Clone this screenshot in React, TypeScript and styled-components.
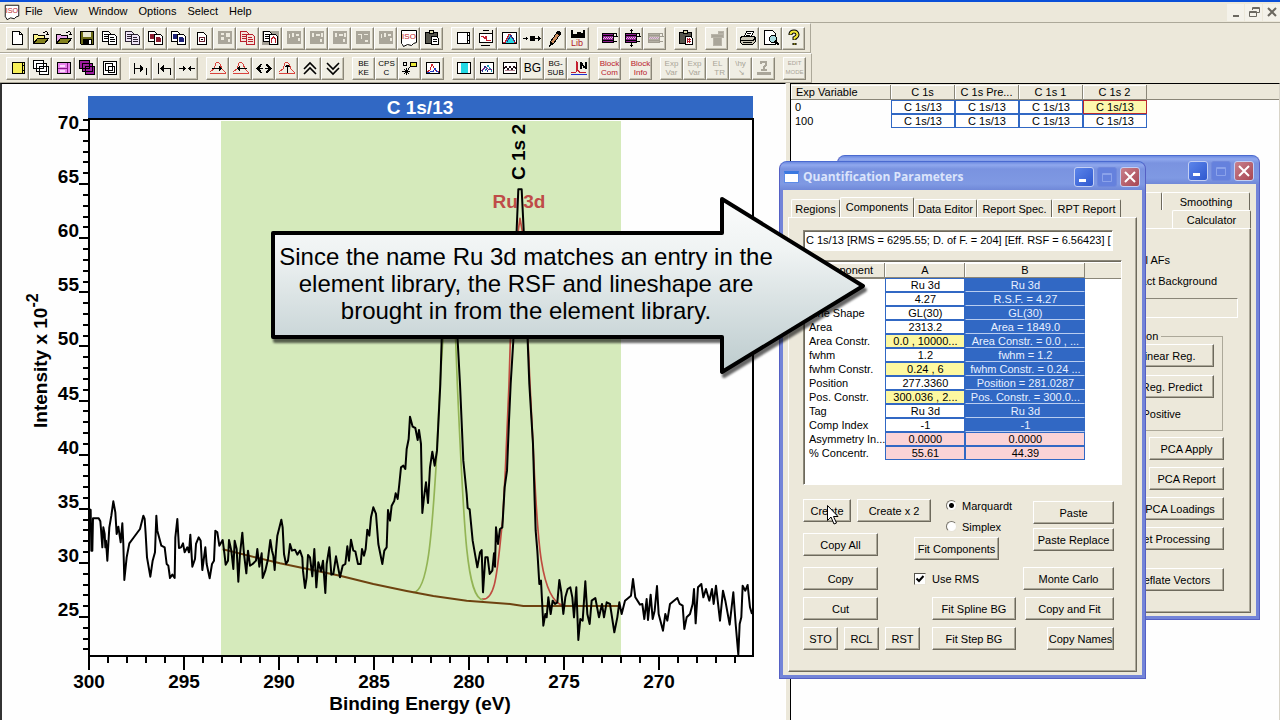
import React from "react";
import styled, { createGlobalStyle, css } from "styled-components";

const Global = createGlobalStyle`
  * { box-sizing: border-box; }
  body { margin: 0; background: #ece8da; overflow: hidden; }
  body, button, input, table { font-family: "Liberation Sans", Arial, sans-serif; font-size: 11px; color: #000; }
`;

const face = "#ece8da";
const blue = "#3168c4";

/* ---------- application frame ---------- */

const Desktop = styled.div`
  position: relative;
  display: flex;
  flex-direction: column;
  height: 100vh;
  background: ${face};
  overflow: hidden;
`;

const MenuBar = styled.nav`
  display: flex;
  align-items: center;
  height: 23px;
  border-top: 2px solid #0a4fd8;
  border-bottom: 1px solid #aca899;
  padding-left: 3px;
`;

const MenuItem = styled.button`
  border: 0;
  background: none;
  padding: 0;
  margin-right: 11px;
  line-height: 14px;
  margin-bottom: 2px;
`;

const MenuLogo = styled.span`
  display: flex;
  width: 22px;
`;

const FrameButtons = styled.div`
  display: flex;
  gap: 1px;
  margin-left: auto;
`;

const FrameButton = styled.button`
  width: 17px;
  height: 17px;
  padding: 0;
  border: 0;
  background: #f4f2ea;
  display: grid;
  place-items: center;
`;

const ToolRow = styled.div`
  display: flex;
  align-items: center;
  align-self: flex-start;
  gap: 8px;
  height: 30px;
  padding: 0 5px 0 6px;
  border-top: 1px solid #fff;
  border-bottom: 1px solid #aca899;
  border-right: 1px solid #aca899;
`;

const ToolGroup = styled.div`
  display: flex;
`;

const ToolButton = styled.button`
  width: 23px;
  height: 23px;
  padding: 0;
  display: grid;
  place-items: center;
  overflow: hidden;
  background: #f0eee4;
  border: 1px solid;
  border-color: #fff #8a8678 #8a8678 #fff;
  box-shadow: inset -1px -1px 0 #c4c0b0;
`;

const TinyText = styled.span<{ $color?: string; $size?: number }>`
  font-size: ${(p) => p.$size ?? 8}px;
  line-height: 9px;
  color: ${(p) => p.$color ?? "#000"};
  white-space: pre;
  text-align: center;
`;

const Panes = styled.div`
  flex: 1;
  min-height: 0;
  display: grid;
  grid-template-columns: 786fr 490fr;
  column-gap: 4px;
`;

const ChartPane = styled.main`
  background: #fefefe;
  border-top: 1px solid #000;
  border-left: 2px solid #333;
  border-right: 1px solid #fff;
  min-width: 0;
`;

const ListPane = styled.section`
  background: #fefefe;
  border-top: 1px solid #000;
  border-left: 1px solid #000;
  border-right: 1px solid #d8d4c8;
  min-width: 0;
`;

/* ---------- tables ---------- */

const HeaderStrip = styled.div`
  background: linear-gradient(${face} 15px, #8a8678 15px, #8a8678 16px, transparent 16px);
  padding-top: 1px;
`;

const Grid = styled.table`
  table-layout: fixed;
  border-collapse: separate;
  border-spacing: 0;
`;

const Col = styled.col<{ $w: number }>`
  width: ${(p) => p.$w}px;
`;

const HeadCell = styled.th<{ $left?: boolean }>`
  height: 15px;
  padding: 0 2px 0 ${(p) => (p.$left ? 5 : 2)}px;
  line-height: 14px;
  font-weight: normal;
  text-align: ${(p) => (p.$left ? "left" : "center")};
  background: ${face};
  border-right: 1px solid #8a8678;
  border-bottom: 1px solid #8a8678;
  box-shadow: inset 1px 1px 0 #fff;
  white-space: nowrap;
  overflow: hidden;
`;

const RowLabel = styled.th`
  height: 14px;
  padding: 0 0 0 4px;
  line-height: 12px;
  font-weight: normal;
  text-align: left;
  white-space: nowrap;
  overflow: hidden;
`;

type Tone = "plain" | "active" | "yellow" | "selected" | "pink";

const tones = {
  plain: css`background: #fff;`,
  active: css`background: #fdf8ae; border-color: #b82a30;`,
  yellow: css`background: #fdf8a0;`,
  selected: css`background: ${blue}; color: #e8f0ff; border-color: ${blue}; border-bottom-color: #b9cdf0;`,
  pink: css`background: #fbd3d6;`,
};

const Cell = styled.td<{ $tone: Tone }>`
  height: 14px;
  padding: 0;
  line-height: 12px;
  text-align: center;
  white-space: nowrap;
  overflow: hidden;
  border: 1px solid ${blue};
  ${(p) => tones[p.$tone]}
`;

/* ---------- windows ---------- */

const WindowFrame = styled.section<{ $x: number; $y: number; $w: number; $h: number }>`
  position: absolute;
  left: ${(p) => p.$x}px;
  top: ${(p) => p.$y}px;
  width: ${(p) => p.$w}px;
  min-height: ${(p) => p.$h}px;
  display: flex;
  flex-direction: column;
  padding: 0 3px 3px;
  border-radius: 8px 8px 0 0;
  background: #7384d8;
  border: 1px solid #5560c4;
  border-top-color: #4a6ad0;
`;

const TitleBar = styled.header`
  display: flex;
  align-items: center;
  height: 28px;
  padding: 1px 0 0 1px;
  margin: 0 -3px;
  border-radius: 7px 7px 0 0;
  background: linear-gradient(#6c8ae0, #90a8ee 3px, #7a93e0 7px, #7f99e3 22px, #7088d8);
`;

const TitleIcon = styled.span`
  width: 15px;
  height: 12px;
  margin: 0 4px 0 3px;
  background: #fff;
  border: 1px solid #5c8ce8;
  border-top: 3px solid #3a78e0;
`;

const Title = styled.h2`
  flex: 1;
  margin: 0;
  font-family: "Open Sans", sans-serif;
  font-size: 12px;
  font-weight: 700;
  color: #dbe4fb;
  white-space: nowrap;
`;

const Caption = styled.button<{ $kind: "min" | "max" | "close" }>`
  width: 20px;
  height: 20px;
  margin-right: ${(p) => (p.$kind === "close" ? 5 : 3)}px;
  padding: 0;
  display: grid;
  place-items: center;
  border-radius: 3px;
  border: 1px solid ${(p) => (p.$kind === "max" ? "#7088dc" : "#c3cff4")};
  background: ${(p) =>
    p.$kind === "min" ? "linear-gradient(135deg,#5c85ea,#2f58cf)" : p.$kind === "max" ? "#6581dd" : "linear-gradient(135deg,#c8808c,#a84652)"};
`;

const Client = styled.div`
  flex: 1;
  display: flex;
  flex-direction: column;
  background: ${face};
  padding: 8px 5px 3px;
`;

const TabStrip = styled.div`
  display: flex;
  align-items: flex-end;
  height: 19px;
  padding-left: 3px;
`;

const Tab = styled.button<{ $w: number; $on?: boolean }>`
  width: ${(p) => p.$w}px;
  height: ${(p) => (p.$on ? 21 : 18)}px;
  margin-bottom: ${(p) => (p.$on ? -1 : 0)}px;
  padding: 0 0 ${(p) => (p.$on ? 3 : 0)}px;
  line-height: 14px;
  white-space: nowrap;
  background: ${face};
  border: 1px solid;
  border-color: #fff #6d695c ${face} #fff;
  border-radius: 2px 2px 0 0;
  border-bottom: 0;
`;

const TabPage = styled.div`
  flex: 1;
  border: 1px solid;
  border-color: #fff #6d695c #6d695c #fff;
  box-shadow: inset -1px -1px 0 #aca899;
`;

const FitPage = styled(TabPage)`
  padding: 12px 14px 18px;
  display: flex;
  flex-direction: column;
`;

const sunken = css`
  border: 1px solid;
  border-color: #8a8678 #fff #fff #8a8678;
  box-shadow: inset 1px 1px 0 #6d695c;
`;

const Summary = styled.input`
  width: 310px;
  height: 21px;
  padding: 0 0 2px 2px;
  background: #fff;
  outline: 0;
  ${sunken}
`;

const ParamBox = styled.div`
  height: 225px;
  margin-top: 9px;
  padding: 2px 0 0 1px;
  background: #fff;
  ${sunken}
`;

const ParamHead = styled(HeaderStrip)`
  padding-top: 0;
`;

const Controls = styled.div`
  display: grid;
  grid-template-columns: 111px 102px 98px;
  row-gap: 7px;
  margin-top: 14px;
`;

const Stack = styled.div<{ $gap?: number; $top?: number; $end?: boolean }>`
  display: flex;
  flex-direction: column;
  align-items: ${(p) => (p.$end ? "flex-end" : "flex-start")};
  gap: ${(p) => p.$gap ?? 0}px;
  padding-top: ${(p) => p.$top ?? 0}px;
`;

const Line = styled.div`
  display: flex;
  gap: 6px;
`;

const Push = styled.button<{ $w: number; $end?: boolean }>`
  flex: none;
  width: ${(p) => p.$w}px;
  height: 23px;
  padding: 0;
  line-height: 14px;
  white-space: nowrap;
  justify-self: ${(p) => (p.$end ? "end" : "start")};
  background: ${face};
  border: 1px solid;
  border-color: #fff #6d695c #6d695c #fff;
  box-shadow: inset -1px -1px 0 #aca899;
`;

const Choice = styled.label`
  display: flex;
  align-items: center;
  gap: 5px;
  height: 21px;
  white-space: nowrap;
`;

const Choices = styled.div`
  padding: 0 0 0 32px;
  margin: -4px 0 0;
`;

const Radio = styled.input`
  appearance: none;
  width: 11px;
  height: 11px;
  margin: 0;
  border-radius: 50%;
  border: 1px solid;
  border-color: #77736a #e8e4d8 #e8e4d8 #77736a;
  background: #fff;
  &:checked { background: radial-gradient(#000 2px, #fff 3px); }
`;

const Check = styled.input`
  appearance: none;
  width: 12px;
  height: 12px;
  margin: 0;
  border: 1px solid;
  border-color: #55524a #e8e4d8 #e8e4d8 #55524a;
  background: #fff url("data:image/svg+xml,%3Csvg xmlns='http://www.w3.org/2000/svg' viewBox='0 0 10 10'%3E%3Cpath d='M1.5 4.5 4 7 8.500 2' fill='none' stroke='black' stroke-width='2'/%3E%3C/svg%3E");
`;

const UseRms = styled(Choice)`
  height: 23px;
  gap: 6px;
`;

/* ---------- processing window ---------- */

const BackTabs = styled.div<{ $indent: number }>`
  display: flex;
  justify-content: flex-end;
  padding-right: ${(p) => p.$indent}px;
`;

const BackPage = styled(TabPage)`
  display: flex;
  flex-direction: column;
  align-items: flex-end;
  padding: 22px 26px 20px 0;
`;

const BackLabel = styled.label<{ $shift: number }>`
  margin-right: ${(p) => p.$shift}px;
  height: 21px;
  line-height: 18px;
`;

const BackField = styled.input`
  width: 240px;
  height: 20px;
  margin: 5px -14px 0 0;
  background: ${face};
  ${sunken}
  box-shadow: none;
`;

const GroupBox = styled.fieldset`
  display: flex;
  flex-direction: column;
  align-items: flex-end;
  gap: 8px;
  width: 180px;
  height: 102px;
  margin: 11px 1px 6px 0;
  padding: 1px 8px 0 0;
  border: 1px solid #aca899;
  & > legend { margin-left: 22px; padding: 0 3px; line-height: 14px; }
`;

const GroupText = styled.label`
  margin-right: 33px;
  line-height: 16px;
`;

const PcaButtons = styled.div`
  display: flex;
  flex-direction: column;
  align-items: flex-end;
  gap: 7px;
  & > :last-child { margin-top: 11px; }
`;

/* ---------- callout ---------- */

const Callout = styled.aside`
  position: absolute;
  left: 268px;
  top: 194px;
  width: 606px;
  height: 190px;
`;

const CalloutText = styled.p`
  position: absolute;
  left: 4px;
  top: 49px;
  width: 508px;
  margin: 0;
  text-align: center;
  font-size: 24px;
  line-height: 27px;
  white-space: pre-line;
`;

const Pointer = styled.svg`
  position: absolute;
  left: 826px;
  top: 504px;
`;

/* ---------- toolbar drawings ---------- */

const I = ({ children, w = 20 }: { children: React.ReactNode; w?: number }) => (
  <svg width={w} height={w} viewBox="0 0 20 20" fill="none" stroke="#000" shapeRendering="crispEdges" aria-hidden="true">
    {children}
  </svg>
);

const Page = () => <I><path d="M4.500 3.500h7l3 3v10h-10z" fill="#fff" /><path d="M11.500 3.500v3h3" /></I>;
const Open = ({ c }: { c: string }) => (
  <I>
    <path d="M2.500 15.500v-9h4l1 1h6v3" fill={c} />
    <path d="M2.500 15.500l4-5h11l-4 5z" fill="#84821e" />
    <path d="M11.500 4.500h2l1-1h1l1 1v2m-2 0h3" />
  </I>
);
const Save = () => <I><path d="M3.500 3.500h13v13h-12l-1-1z" fill="#6d6d18" /><path d="M6 4h8v5H6z" fill="#e9e9d2" stroke="none" /><path d="M6 11h9v5H6z" fill="#000" stroke="none" /><path d="M12 12h2v4h-2z" fill="#fff" stroke="none" /></I>;
const Pages = ({ ink = "#000", fill, bg, paper = "#fff", mark }: { ink?: string; fill?: string; bg?: string; paper?: string; mark?: string }) => (
  <I>
    {bg && <path d="M1 3h17v14H1z" fill={bg} stroke="none" />}
    <path d="M2.500 3.500h6l2 2v8h-8z" fill={paper} stroke={ink} />
    <path d="M4 6.500h4M4 8.500h4M4 10.500h4" stroke={fill ?? ink} />
    <path d="M8.500 6.500h6l2 2v8h-8z" fill={paper} stroke={ink} />
    {mark ? <path d="M10.500 15v-4l2-2 2 2v4" stroke={mark} /> : <path d="M10 9.500h4M10 11.500h5M10 13.500h5" stroke={fill ?? ink} />}
    {fill && <path d="M4 7h4v4H4zM10 10h5v4h-5z" fill={fill} stroke="none" />}
  </I>
);
const PageBox = () => <I><path d="M5.500 4.500h6l3 3v9h-9z" fill="#fff" /><path d="M7.500 9.500h5v4h-5z" stroke="#6a2030" /><path d="M9 11.500h2" /></I>;
const Ghost = ({ v }: { v: number }) => (
  <I>
    <path d="M3 3h14v13H3z" fill="#aaa69a" stroke="none" />
    <path d={["M6 5h3v2H6zM11 5h4v4h-4zM6 9h3v3H6zM13 11h2v3h-2z", "M5 6h1v4H5zM8 5h2v4H8zM12 6h3v2h-3zM14 10h2v3h-2z", "M5 5h2v4H5zM9 6h4v2H9zM13 11h2v3h-2zM14 5h2v4h-2z", "M5 6h4v1H5zM8 7h1v4H8zM11 6h4v1h-4zM12 12h3v2h-3z"][v % 4]} fill="#edeadf" stroke="none" />
  </I>
);
const Iso = ({ w = 20 }: { w?: number }) => (
  <svg width={w} height={w} viewBox="0 0 20 20" fill="none" stroke="#000" aria-hidden="true">
    <path d="M2.500 2.500h15v12l-3 1-2 2-4-1-4 2-1-2-1-1z" fill="#fff" />
    <text x="10" y="11" fontSize="8" textAnchor="middle" fill="#c01c28" stroke="none">ISO</text>
  </svg>
);
const Clip = ({ red }: { red?: boolean }) => (
  <I>
    <path d="M3.500 4.500h12v11h-12z" fill="#55554c" /><path d="M7.500 2.500h4v3h-4z" fill="#d8d4a8" />
    <path d="M9.500 8.500h5l2 2v6h-7z" fill="#fff" /><path d="M11 11.500h4M11 13.500h4" stroke={red ? "#b01828" : "#000"} />
    {red && <path d="M11.500 10v5M13.500 10v5" stroke="#b01828" />}
  </I>
);
const Box = ({ fill = "#fff" }: { fill?: string }) => <I><path d="M4.500 4.500h12v11h-12z" fill={fill} /><path d="M14.500 5v11M15 7.500h1M15 12.500h1" /></I>;
const WinChart = () => <I><path d="M7 2.500h6M5 17.500h9M16 2v3" /><path d="M3.500 5.500h13v9h-13z" fill="#fff" /><path d="M5 8.500h2l2 2 1-2 1 4h4" stroke="#c42030" /></I>;
const CyanPeak = () => <I><path d="M3.500 4.500h14v11h-14z" fill="#fff" /><path d="M6 15l4-9h2l4 9z" fill="#27d4e0" stroke="none" /><path d="M4 14.500h2l4-8h1l5 8h1" stroke="#c42030" /><path d="M8 14l4-7 4 7" stroke="#20308c" /></I>;
const Move = () => <I><path d="M1 10.500h5M4.500 9v3M13 10.500h6M17.500 9v3M16.500 8v5" /><path d="M8 8h5v5H8z" fill="#000" stroke="none" /></I>;
const Pencil = () => <I><path d="M13 3l3 2-7 10-4 3 1-5z" fill="#c98b5c" /><path d="M5 17l1-3 2 2zM13 3l3 2-1 2-4-2z" fill="#000" /></I>;
const Lib = () => (
  <svg width="20" height="20" viewBox="0 0 20 20" aria-hidden="true">
    <path d="M3 2h2v4h4V4h4v1h2V2h2v8H3z" />
    <text x="3" y="18" fontSize="9" fill="#b01828">Lib</text>
  </svg>
);
const Scroll = ({ c = "#8a1c8c", ink = "#000", tall }: { c?: string; ink?: string; tall?: boolean }) => (
  <I>
    <path d="M3.500 5.500h11v9h-11z" fill={c} stroke={ink} />
    <path d="M4 7.500h10M4 12.500h10" stroke={ink} /><path d="M5 9.500h9M4 10.500h9" stroke="#e6b4e8" strokeDasharray="1 1" />
    <path d="M14 5.500h3v3M15 8.500h4M14 13.500h4" stroke={ink} />
    {tall && <path d="M9.500 1v4M8 2.500h3M9.500 15v4M8 17.500h3" stroke={ink} />}
  </I>
);
const GrayPot = () => <I><path d="M6 9h8v8H6zM4 6h12v3H4zM11 3h5v2h-5z" fill="#aaa69a" stroke="#b8b4a8" /></I>;
const Printer = () => <I><path d="M6.500 8.500l2-5h7l-2 5z" fill="#fff" /><path d="M2.500 9.500l2-1h11l2 1v4l-3 3h-10l-2-2z" fill="#c8c4b4" /><path d="M3 12.500h12l2-2M5 14.500h9" /><path d="M9 5.500h4M8 7h4" /></I>;
const Preview = () => <I><path d="M3.500 2.500h8l3 3v11h-11z" fill="#fff" /><circle cx="12" cy="11" r="3.500" fill="#a8dbe0" /><path d="M14 13l4 4" strokeWidth="2" /></I>;
const Help = () => (
  <svg width="20" height="20" viewBox="0 0 20 20" fill="none" aria-hidden="true">
    <path d="M6.500 7V6Q7 3.500 10 3.500T13.500 6.500Q13.500 8.500 10.500 10V12M10.500 15v2" stroke="#000" strokeWidth="4" />
    <path d="M6.500 6.500V6Q7 3.500 10 3.500T13.500 6.500Q13.500 8.500 10.500 10V11.500M10.500 15.500v1" stroke="#f3e63a" strokeWidth="2" />
  </svg>
);
const StackIcon = ({ fill = "#fff" }: { fill?: string }) => <I><path d="M2.500 2.500h10v8h-10z" fill={fill} /><path d="M5.500 5.500h10v8h-10z" fill={fill} /><path d="M8.500 8.500h9v8h-9z" fill={fill} /><path d="M5.500 5.500h7v5h-7zM8.500 8.500h7v5h-7z" /></I>;
const Nested = () => <I><path d="M3.500 3.500h13v13h-13z" fill="#fff" /><path d="M5.500 5.500h7v7h-7zM8.500 8.500h6v6h-6z" /></I>;
const MagWin = () => <I><path d="M3.500 4.500h13v11h-13z" fill="#e884ec" /><path d="M13.500 5v10M4 10.500h9" stroke="#8a1c8c" /><path d="M6 7h5v2H6zM6 12h5v2H6z" fill="#fbd8fc" stroke="none" /></I>;
const Right = () => <I><path d="M3 10.500h9M9.500 7v7M10.500 8v5M11.500 9v3M3.500 5v11M15.500 10v7" /></I>;
const Left = () => <I><path d="M6 10.500h10M8.500 8v5M9.500 7v7M7.500 9v3M4.500 5v11M16.500 10v7" /></I>;
const Inward = () => <I><path d="M2 10.500h7M6.500 8v5M7.500 9v3M11 10.500h7M13.500 8v5M12.500 9v3" /></I>;
const Peak = ({ d }: { d: string }) => <I><path d="M2 14l4-3 2-6 2-1 2 2 2 5 4 4M2 15.500h16" stroke="#d8423c" /><path d={d} /></I>;
const Spread = () => <I><path d="M7.500 6l-4 4.500 4 4.500M12.500 6l4 4.500-4 4.500" strokeWidth="2" /><path d="M4 10.500h5M11 10.500h5" /></I>;
const Chev = ({ d }: { d: string }) => <svg width="20" height="20" viewBox="0 0 20 20" fill="none" stroke="#000" strokeWidth="1.600" aria-hidden="true"><path d={d} /></svg>;
const Star = () => <I><path d="M10.500 4.500h6v4h-6z" fill="#e9e83a" /><path d="M3.500 4.500h3v3h-3zM2 13.500h8M6.500 10v7M4 11l5 5M9 11l-5 5M10 9l-2 2" /></I>;
const TwoPeak = () => <I><path d="M3.500 4.500h13v11h-13z" fill="#fff" /><path d="M4 14l3-2 2-6 3 6 4 2" stroke="#d02028" /><path d="M4 14.500l6-1 2-3 2 3 2 1" stroke="#2038c0" /></I>;
const Cyan = () => <I><path d="M3.500 4.500h13v11h-13z" fill="#fff" /><path d="M7 5h7v10H7z" fill="#22d8e4" stroke="none" /></I>;
const BlueChart = () => <I><path d="M3.500 4.500h13v11h-13z" fill="#fff" /><path d="M5 14l3-6 3 6" stroke="#20308c" /><path d="M8 13l3-6 4 7" stroke="#1c9cb4" /><path d="M4 13l5-4 3 3 3-1" stroke="#7a2c8c" /></I>;
const Wave = () => <I><path d="M3.500 4.500h13v11h-13z" fill="#fff" /><path d="M4 11l2-3 2 4 2-4 2 4 2-4 2 3" stroke="#201018" /><path d="M5 12.500h10" stroke="#b0808c" /></I>;
const NSpec = () => <I><path d="M2 14.500h5l1-11 1 9 2 2h6" stroke="#c42030" /><path d="M2 16.500h16" stroke="#2030d0" /><path d="M11.500 4v7M12 5l4 5M16.500 4v7" strokeWidth="2" /></I>;
const Hand = () => <I><path d="M3 14h14v3H3zM7 11h6v2H7z" fill="#aaa69a" stroke="none" /><path d="M7 6V4h5v3l-2 2v2" stroke="#aaa69a" strokeWidth="2" /></I>;

const gray = "#a9a598";
const red = "#b8202c";
type Tool = [string, React.ReactNode];

const rowOne: Tool[][] = [
  [
    ["New", <Page />], ["Open", <Open c="#fbf48a" />], ["Open and merge", <Open c="#e9a8ea" />], ["Save", <Save />],
    ["Copy", <Pages />], ["Copy grid", <Pages ink="#2a2030" paper="#f0e4f8" />], ["Copy red", <Pages fill="#8c1c30" />], ["Copy blue", <Pages fill="#1c2078" />],
    ["Page", <PageBox />], ["Tile 1", <Ghost v={0} />], ["Red pages", <Pages ink="#b8202c" paper="#f5e4dc" />], ["Paste pages", <Pages bg="#a5a196" mark="#b8202c" />],
    ["Tile 2", <Ghost v={1} />], ["Tile 3", <Ghost v={2} />], ["Tile 4", <Ghost v={2} />], ["Tile 5", <Ghost v={3} />], ["Tile 6", <Ghost v={1} />],
    ["ISO", <Iso />], ["Paste", <Clip />],
  ],
  [["Window", <Box />], ["Chart window", <WinChart />], ["Peaks", <CyanPeak />], ["Shift", <Move />], ["Edit", <Pencil />], ["Library", <Lib />]],
  [["Process", <Scroll />], ["Scale", <Scroll tall />], ["Process off", <Scroll c="#b4b0a4" ink="#a09c90" />]],
  [["Clipboard", <Clip red />]],
  [["Discard", <GrayPot />]],
  [["Print", <Printer />], ["Preview", <Preview />], ["Help topics", <Help />]],
];

const rowTwo: Tool[][] = [
  [["Single", <Box fill="#f6ef58" />], ["Stack", <StackIcon />], ["Split", <MagWin />], ["Overlay", <StackIcon fill="#9c1ca0" />], ["Nested", <Nested />]],
  [["To right", <Right />], ["To left", <Left />], ["Inward", <Inward />]],
  [
    ["Peak right", <Peak d="M4 10.500h10M11.500 8v5M12.500 9v3" />], ["Peak left", <Peak d="M6 10.500h10M8.500 8v5M7.500 9v3" />], ["Spread", <Spread />],
    ["Peak up", <Peak d="M10.500 7v8M8 8.500h5M9 7.500h3" />], ["Up", <Chev d="M4 11l6-6 6 6M4 16l6-6 6 6" />], ["Down", <Chev d="M4 5l6 6 6-6M4 10l6 6 6-6" />],
  ],
  [["BE KE", <TinyText>{"BE\nKE"}</TinyText>], ["CPS C", <TinyText>{"CPS\nC"}</TinyText>], ["Annotate", <Star />], ["Two peaks", <TwoPeak />]],
  [
    ["Region", <Cyan />], ["Blue chart", <BlueChart />], ["Wave", <Wave />], ["BG", <TinyText $size={12}>BG</TinyText>],
    ["BG-SUB", <TinyText>{"BG-\nSUB"}</TinyText>], ["Spectrum N", <NSpec />],
  ],
  [["Block Com", <TinyText $color={red}>{"Block\nCom"}</TinyText>]],
  [["Block Info", <TinyText $color={red}>{"Block\nInfo"}</TinyText>]],
  [
    ["Exp Var", <TinyText $color={gray}>{"Exp\nVar"}</TinyText>], ["Exp Var 2", <TinyText $color={gray}>{"Exp\nVar"}</TinyText>],
    ["EL TR", <TinyText $color={gray}>{"EL\n  TR"}</TinyText>], ["Why", <TinyText $color={gray}>{"\\hy\n ↘"}</TinyText>], ["Ask", <Hand />],
  ],
  [["EDIT MODE", <TinyText $color={gray} $size={6}>{"EDIT\nMODE"}</TinyText>]],
];

const Tools = ({ groups }: { groups: Tool[][] }) => (
  <ToolRow>
    {groups.map((g, i) => (
      <ToolGroup key={i}>
        {g.map(([name, icon]) => <ToolButton key={name} aria-label={name}>{icon}</ToolButton>)}
      </ToolGroup>
    ))}
  </ToolRow>
);

/* ---------- spectrum ---------- */

// Samples are stored on a grid three times finer than the chart's own units.
const spectrum =
  "266,1527 272,1530 274,1652 277,1652 279,1555 296,1555 301,1564 303,1587 307,1642 310,1582 314,1602 316,1642 318,1622 322,1682 328,1582 334,1547 340,1504 346,1537 350,1602 355,1580 359,1607 362,1627 367,1570 370,1632 373,1740 380,1672 388,1630 400,1614 420,1587 430,1547 434,1557 437,1602 441,1672 451,1730 458,1682 465,1657 469,1547 472,1592 484,1637 494,1642 500,1692 505,1697 510,1734 517,1724 524,1734 526,1612 532,1557 537,1644 543,1642 549,1630 554,1657 562,1642 567,1657 571,1604 577,1700 585,1677 588,1632 596,1612 602,1622 607,1710 616,1642 620,1692 629,1735 636,1692 642,1682 646,1592 652,1597 658,1637 668,1620 674,1667 677,1694 684,1682 687,1620 694,1652 700,1707 704,1622 710,1647 715,1745 720,1662 727,1598 732,1662 739,1720 744,1652 750,1697 758,1692 768,1682 772,1647 778,1700 785,1660 788,1734 796,1712 804,1677 811,1620 816,1652 820,1667 824,1710 828,1652 832,1607 844,1559 848,1582 852,1662 858,1692 864,1682 870,1632 876,1652 885,1649 892,1664 900,1652 907,1672 909,1712 915,1764 920,1732 924,1665 930,1672 937,1729 943,1647 949,1762 955,1687 963,1714 969,1682 976,1779 980,1692 988,1642 994,1724 1000,1722 1008,1669 1020,1732 1028,1697 1036,1692 1042,1639 1047,1682 1053,1619 1060,1652 1066,1654 1074,1692 1082,1692 1086,1647 1092,1667 1097,1647 1102,1589 1108,1607 1113,1552 1120,1522 1128,1542 1135,1632 1147,1692 1153,1652 1160,1642 1164,1530 1170,1562 1175,1517 1183,1502 1187,1480 1193,1497 1198,1452 1203,1402 1210,1397 1216,1407 1220,1347 1226,1317 1230,1250 1238,1280 1246,1284 1253,1320 1257,1290 1263,1332 1267,1539 1272,1492 1278,1447 1284,1509 1290,1402 1297,1355 1304,1397 1311,1352 1316,1252 1321,1152 1325,1022 1335,860 1350,780 1362,860 1373,1022 1380,1152 1390,1382 1400,1482 1403,1524 1409,1528 1418,1622 1432,1702 1440,1657 1445,1650 1449,1777 1456,1672 1463,1672 1469,1722 1477,1712 1482,1660 1485,1700 1488,1582 1494,1632 1500,1587 1507,1582 1514,1462 1521,1412 1527,1262 1532,1152 1540,1022 1550,689 1555,568 1565,568 1571,689 1583,1022 1588,1152 1599,1332 1604,1502 1607,1592 1612,1652 1618,1752 1623,1742 1630,1877 1636,1842 1640,1852 1645,1792 1652,1842 1658,1802 1665,1812 1672,1807 1678,1740 1684,1777 1690,1842 1696,1792 1703,1767 1711,1762 1717,1792 1722,1852 1729,1762 1735,1920 1741,1857 1748,1862 1756,1744 1762,1842 1769,1872 1775,1802 1786,1794 1797,1852 1806,1812 1812,1852 1820,1807 1830,1812 1843,1897 1852,1852 1858,1807 1865,1842 1875,1802 1893,1787 1899,1737 1906,1792 1920,1814 1927,1812 1933,1857 1940,1797 1944,1860 1952,1784 1958,1857 1964,1832 1971,1758 1976,1842 1989,1892 1996,1842 2002,1862 2010,1812 2032,1794 2039,1812 2048,1817 2053,1887 2060,1852 2070,1842 2078,1812 2082,1767 2087,1870 2094,1762 2104,1752 2110,1792 2118,1767 2128,1802 2136,1767 2141,1812 2148,1757 2160,1862 2169,1772 2176,1802 2189,1874 2200,1777 2207,1872 2215,1964 2219,1872 2224,1852 2228,1757 2236,1772 2243,1755 2250,1822 2256,1842";
const background = "668,1648 840,1690 1020,1727 1120,1752 1220,1773 1300,1788 1400,1802 1530,1812 1570,1818 1860,1818";
const green = "M1240 1777 C1285 1775 1296 1590 1308 1402 L1320 1152 L1330 1000 L1345 800 L1367 1022 L1372 1152 C1392 1600 1400 1795 1450 1800";
const ruthenium = "M1445 1797 C1490 1805 1492 1700 1508 1560 L1516 1412 L1527 1152 L1531 1022 L1545 760 L1560 655 L1568 700 L1584 1022 L1590 1152 L1600 1352 C1612 1600 1618 1800 1690 1817";

const yTick = (v: number) => 617 - Math.round(((v - 25) * 487) / 45);
const xTick = (v: number) => 89 + (300 - v) * 19;
const range = (a: number, b: number) => Array.from({ length: b - a + 1 }, (_, i) => a + i);

const Plot = styled.svg`
  display: block;
  width: 100%;
  height: 100%;
  font-family: "Liberation Sans", Arial, sans-serif;
  font-size: 19px;
  font-weight: 700;
`;

const Spectrum = () => (
  <Plot viewBox="2 84 783 636" preserveAspectRatio="xMinYMin meet" role="img" aria-label="C 1s/13 spectrum">
    <rect x="88" y="96" width="665" height="23" fill={blue} />
    <text x="420" y="114" fill="#fff" textAnchor="middle">C 1s/13</text>
    <rect x="221" y="121" width="400" height="534" fill="#d5eabb" />
    <g stroke="#000" strokeWidth="2" fill="none" shapeRendering="crispEdges">
      <path d="M89 119H753V656H89Z" />
      {range(22, 70).map((v) => <path key={v} d={`M${v % 5 ? 83 : 79} ${yTick(v)}H89`} />)}
      <path d="M83 120H89" />
      {range(266, 300).map((v) => <path key={v} d={`M${xTick(v)} 656V${v % 5 ? 663 : 670}`} />)}
    </g>
    {range(5, 14).map((n) => <text key={n} x="79" y={yTick(n * 5) - 1} textAnchor="end">{n * 5}</text>)}
    {range(54, 60).map((n) => <text key={n} x={xTick(n * 5)} y="688" textAnchor="middle">{n * 5}</text>)}
    <text x="420" y="710" textAnchor="middle">Binding Energy (eV)</text>
    <text transform="translate(47 428) rotate(-90)">Intensity x 10<tspan dy="-9" fontSize="16">-2</tspan></text>
    <text transform="translate(525 180) rotate(-90)">C 1s 2</text>
    <text x="519" y="208" fill="#bf4c48" textAnchor="middle">Ru 3d</text>
    <g transform="scale(0.33333)" fill="none" strokeWidth="5" strokeLinejoin="round">
      <path d={ruthenium} stroke="#bf4c40" />
      <path d={green} stroke="#93b455" />
      <polyline points={background} stroke="#6e4310" strokeWidth="6" />
      <polyline points={spectrum} stroke="#000" strokeWidth="6" />
    </g>
  </Plot>
);

/* ---------- data ---------- */

const params: [string, string, string, Tone, Tone][] = [
  ["Name", "Ru 3d", "Ru 3d", "plain", "selected"],
  ["R.S.F.", "4.27", "R.S.F. = 4.27", "plain", "selected"],
  ["Line Shape", "GL(30)", "GL(30)", "plain", "selected"],
  ["Area", "2313.2", "Area = 1849.0", "plain", "selected"],
  ["Area Constr.", "0.0 , 10000...", "Area Constr. = 0.0 , ...", "yellow", "selected"],
  ["fwhm", "1.2", "fwhm = 1.2", "plain", "selected"],
  ["fwhm Constr.", "0.24 , 6", "fwhm Constr. = 0.24 ...", "yellow", "selected"],
  ["Position", "277.3360", "Position = 281.0287", "plain", "selected"],
  ["Pos. Constr.", "300.036 , 2...", "Pos. Constr. = 300.0...", "yellow", "selected"],
  ["Tag", "Ru 3d", "Ru 3d", "plain", "selected"],
  ["Comp Index", "-1", "-1", "plain", "selected"],
  ["Asymmetry In...", "0.0000", "0.0000", "pink", "pink"],
  ["% Concentr.", "55.61", "44.39", "pink", "pink"],
];

const Captions = () => (
  <>
    <Caption $kind="min" aria-label="Minimize"><svg width="12" height="12"><path d="M1 8h7v3H1z" fill="#fff" /></svg></Caption>
    <Caption $kind="max" aria-label="Maximize"><svg width="12" height="12"><path d="M1.500 2.500h9v8h-9zM1 3.500h10" fill="none" stroke="#8ba2ea" /></svg></Caption>
    <Caption $kind="close" aria-label="Close"><svg width="12" height="12"><path d="M1 1l10 10M11 1L1 11" stroke="#fff" strokeWidth="2" /></svg></Caption>
  </>
);

const ProcessingWindow = () => (
  <WindowFrame $x={837} $y={155} $w={423} $h={465} aria-label="Processing">
    <TitleBar><Title /><Captions /></TitleBar>
    <Client>
      <BackTabs $indent={1} role="tablist"><Tab role="tab" $w={80} aria-label="Previous" /><Tab role="tab" $w={88}>Smoothing</Tab></BackTabs>
      <BackTabs $indent={0} role="tablist"><Tab role="tab" $w={79}>Calculator</Tab></BackTabs>
      <BackPage>
        <BackLabel $shift={54}>Total AFs</BackLabel>
        <BackLabel $shift={7}>Subtract Background</BackLabel>
        <BackField aria-label="Expression" />
        <GroupBox>
          <legend>Linear Regression</legend>
          <Push $w={94}>Linear Reg.</Push>
          <Push $w={84}>Reg. Predict</Push>
          <GroupText>Positive</GroupText>
        </GroupBox>
        <PcaButtons>
          <Push $w={75}>PCA Apply</Push>
          <Push $w={75}>PCA Report</Push>
          <Push $w={88}>PCA Loadings</Push>
          <Push $w={116}>Target Processing</Push>
          <Push $w={102}>Deflate Vectors</Push>
        </PcaButtons>
      </BackPage>
    </Client>
  </WindowFrame>
);

const QuantWindow = () => (
  <WindowFrame $x={779} $y={161} $w={367} $h={518} aria-label="Quantification Parameters">
    <TitleBar><TitleIcon /><Title>Quantification Parameters</Title><Captions /></TitleBar>
    <Client>
      <TabStrip role="tablist">
        <Tab role="tab" $w={49}>Regions</Tab>
        <Tab role="tab" $w={74} $on>Components</Tab>
        <Tab role="tab" $w={63}>Data Editor</Tab>
        <Tab role="tab" $w={75}>Report Spec.</Tab>
        <Tab role="tab" $w={69}>RPT Report</Tab>
      </TabStrip>
      <FitPage>
        <Summary aria-label="Fit summary" readOnly value="C 1s/13 [RMS = 6295.55; D. of F. = 204] [Eff. RSF = 6.56423] [" />
        <ParamBox>
          <ParamHead>
            <Grid>
              <colgroup><Col $w={80} /><Col $w={80} /><Col $w={120} /></colgroup>
              <thead><tr><HeadCell>Component</HeadCell><HeadCell>A</HeadCell><HeadCell>B</HeadCell></tr></thead>
              <tbody>
                {params.map(([label, a, b, ta, tb]) => (
                  <tr key={label}><RowLabel scope="row">{label}</RowLabel><Cell $tone={ta}>{a}</Cell><Cell $tone={tb}>{b}</Cell></tr>
                ))}
              </tbody>
            </Grid>
          </ParamHead>
        </ParamBox>
        <Controls>
          <Stack $gap={11}>
            <Line><Push $w={48}>Create</Push><Push $w={74}>Create x 2</Push></Line>
            <Push $w={75}>Copy All</Push>
          </Stack>
          <Stack>
            <Choices>
              <Choice><Radio type="radio" name="method" defaultChecked />Marquardt</Choice>
              <Choice><Radio type="radio" name="method" />Simplex</Choice>
            </Choices>
            <Push $w={85}>Fit Components</Push>
          </Stack>
          <Stack $gap={4} $top={2} $end><Push $w={81}>Paste</Push><Push $w={81}>Paste Replace</Push></Stack>
          <Push $w={75}>Copy</Push>
          <UseRms><Check type="checkbox" defaultChecked />Use RMS</UseRms>
          <Push $w={91} $end>Monte Carlo</Push>
          <Push $w={75}>Cut</Push>
          <Push $w={84} $end>Fit Spline BG</Push>
          <Push $w={89} $end>Copy and Fit</Push>
          <Line><Push $w={35}>STO</Push><Push $w={35}>RCL</Push><Push $w={35}>RST</Push></Line>
          <Push $w={84} $end>Fit Step BG</Push>
          <Push $w={67} $end>Copy Names</Push>
        </Controls>
      </FitPage>
    </Client>
  </WindowFrame>
);

const LibraryCallout = () => (
  <Callout>
    <svg width="606" height="190" viewBox="268 194 606 190" aria-hidden="true">
      <defs>
        <linearGradient id="sheen" x1="0" y1="199" x2="0" y2="373" gradientUnits="userSpaceOnUse">
          <stop offset="0" stopColor="#fbfcfc" /><stop offset="0.3" stopColor="#eff3f3" /><stop offset="0.55" stopColor="#dce4e5" /><stop offset="0.8" stopColor="#cad6d8" /><stop offset="1" stopColor="#bdcbcd" />
        </linearGradient>
        <filter id="drop" x="-5%" y="-5%" width="110%" height="115%"><feDropShadow dx="2" dy="4" stdDeviation="1" floodOpacity="0.6" /></filter>
      </defs>
      <path d="M273 233H722V199L863 286L722 372V337H273Z" fill="url(#sheen)" stroke="#000" strokeWidth="4" strokeLinejoin="round" filter="url(#drop)" />
    </svg>
    <CalloutText>{"Since the name Ru 3d matches an entry in the\nelement library, the RSF and lineshape are\nbrought in from the element library."}</CalloutText>
  </Callout>
);

export default function App() {
  return (
    <Desktop>
      <Global />
      <MenuBar>
        <MenuLogo><Iso w={18} /></MenuLogo>
        {["File", "View", "Window", "Options", "Select", "Help"].map((m) => <MenuItem key={m}>{m}</MenuItem>)}
        <FrameButtons>
          <FrameButton aria-label="Minimize"><svg width="12" height="12"><path d="M3 9h6v2H3z" fill="#6b6860" /></svg></FrameButton>
          <FrameButton aria-label="Restore"><svg width="12" height="12" fill="none" stroke="#6b6860"><path d="M4.500 4V1.500h7v5H9M4 2.500h7M1.500 5.500h7v5h-7zM1 6.500h8" /></svg></FrameButton>
          <FrameButton aria-label="Close"><svg width="12" height="12"><path d="M2 2l8 8M10 2L2 10" stroke="#6b6860" strokeWidth="2" /></svg></FrameButton>
        </FrameButtons>
      </MenuBar>
      <Tools groups={rowOne} />
      <Tools groups={rowTwo} />
      <Panes>
        <ChartPane><Spectrum /></ChartPane>
        <ListPane>
          <HeaderStrip>
            <Grid>
              <colgroup><Col $w={100} />{[0, 1, 2, 3].map((i) => <Col key={i} $w={64} />)}</colgroup>
              <thead><tr>{["Exp Variable", "C 1s", "C 1s Pre...", "C 1s 1", "C 1s 2"].map((h, i) => <HeadCell key={h} $left={i === 0}>{h}</HeadCell>)}</tr></thead>
              <tbody>
                {["0", "100"].map((v, r) => (
                  <tr key={v}>
                    <RowLabel scope="row">{v}</RowLabel>
                    {[0, 1, 2, 3].map((c) => <Cell key={c} $tone={r === 0 && c === 3 ? "active" : "plain"}>C 1s/13</Cell>)}
                  </tr>
                ))}
              </tbody>
            </Grid>
          </HeaderStrip>
        </ListPane>
      </Panes>
      <ProcessingWindow />
      <QuantWindow />
      <LibraryCallout />
      <Pointer width="14" height="22" viewBox="0 0 14 22" aria-hidden="true">
        <path d="M1.500 1.500V16.500L5 13L8 20L10.500 19L7.500 12.500H12Z" fill="#fff" stroke="#000" />
      </Pointer>
    </Desktop>
  );
}
